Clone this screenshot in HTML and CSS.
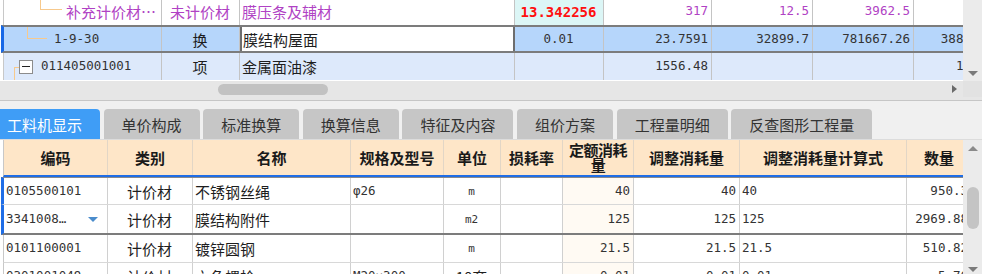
FILE: index.html
```html
<!DOCTYPE html>
<html lang="zh-CN">
<head>
    <meta charset="UTF-8">
    <title>工料机显示</title>
    <link rel="stylesheet" href="styles.css">
</head>
<body>
    <div class="top-pane">
        <div class="top-main">
            <div class="tree-grid">
                <div class="trow first">
                    <div class="cell code"><span class="branch b1"></span><span class="purple t1">补充计价材…</span></div>
                    <div class="cell center purple">未计价材</div>
                    <div class="cell purple">膜压条及辅材</div>
                    <div class="cell center num hi">13.342256</div>
                    <div class="cell right num purple">317</div>
                    <div class="cell right num purple">12.5</div>
                    <div class="cell right num purple">3962.5</div>
                    <div class="cell right num"></div>
                </div>
                <div class="trow sel">
                    <div class="cell code"><span class="branch b2"></span><span class="num t2">1-9-30</span></div>
                    <div class="cell center">换</div>
                    <div class="cell edit">膜结构屋面</div>
                    <div class="cell center num">0.01</div>
                    <div class="cell right num">23.7591</div>
                    <div class="cell right num">32899.7</div>
                    <div class="cell right num">781667.26</div>
                    <div class="cell right num">3888.9</div>
                </div>
                <div class="trow item">
                    <div class="cell code"><span class="branch b3"></span><span class="toggle"><span></span></span><span class="num t3">011405001001</span></div>
                    <div class="cell center">项</div>
                    <div class="cell">金属面油漆</div>
                    <div class="cell"></div>
                    <div class="cell right num">1556.48</div>
                    <div class="cell"></div>
                    <div class="cell"></div>
                    <div class="cell right num">1.00</div>
                </div>
            </div>
            <div class="vscroll top-vs"><span class="arrow down"></span></div>
        </div>
        <div class="hscroll-row">
            <div class="hscroll"><span class="thumb-h"></span><span class="arrow right"></span></div>
            <div class="corner"></div>
        </div>
    </div>

    <div class="tabs">
        <div class="tab active">工料机显示</div>
        <div class="tab">单价构成</div>
        <div class="tab">标准换算</div>
        <div class="tab">换算信息</div>
        <div class="tab">特征及内容</div>
        <div class="tab">组价方案</div>
        <div class="tab">工程量明细</div>
        <div class="tab">反查图形工程量</div>
    </div>

    <div class="bottom-pane">
        <div class="res-grid">
            <div class="grow head">
                <div class="hcell">编码</div>
                <div class="hcell">类别</div>
                <div class="hcell">名称</div>
                <div class="hcell">规格及型号</div>
                <div class="hcell">单位</div>
                <div class="hcell">损耗率</div>
                <div class="hcell tight">定额消耗<br>量</div>
                <div class="hcell">调整消耗量</div>
                <div class="hcell">调整消耗量计算式</div>
                <div class="hcell">数量</div>
            </div>
            <div class="grow sel sel-top">
                <div class="cell num">0105500101</div>
                <div class="cell center">计价材</div>
                <div class="cell">不锈钢丝绳</div>
                <div class="cell num spec">φ26</div>
                <div class="cell center unit">m</div>
                <div class="cell"></div>
                <div class="cell right num quota">40</div>
                <div class="cell right num">40</div>
                <div class="cell num">40</div>
                <div class="cell right num">950.3</div>
            </div>
            <div class="grow sel sel-bottom">
                <div class="cell num">3341008…<span class="drop"></span></div>
                <div class="cell center">计价材</div>
                <div class="cell">膜结构附件</div>
                <div class="cell"></div>
                <div class="cell center unit">m2</div>
                <div class="cell"></div>
                <div class="cell right num quota">125</div>
                <div class="cell right num">125</div>
                <div class="cell num">125</div>
                <div class="cell right num">2969.88</div>
            </div>
            <div class="grow">
                <div class="cell num">0101100001</div>
                <div class="cell center">计价材</div>
                <div class="cell">镀锌圆钢</div>
                <div class="cell"></div>
                <div class="cell center unit">m</div>
                <div class="cell"></div>
                <div class="cell right num quota">21.5</div>
                <div class="cell right num">21.5</div>
                <div class="cell num">21.5</div>
                <div class="cell right num">510.82</div>
            </div>
            <div class="grow">
                <div class="cell num">0301001049</div>
                <div class="cell center">计价材</div>
                <div class="cell">六角螺栓</div>
                <div class="cell num spec">M20×300</div>
                <div class="cell center">10套</div>
                <div class="cell"></div>
                <div class="cell right num quota">0.01</div>
                <div class="cell right num">0.01</div>
                <div class="cell num">0.01</div>
                <div class="cell right num">5.76</div>
            </div>
        </div>
        <div class="vscroll bottom-vs">
            <span class="arrow up"></span>
            <span class="thumb-v"></span>
            <span class="arrow down"></span>
        </div>
    </div>
</body>
</html>
```

FILE: styles.css
```css
* {
    box-sizing: border-box;
}
body {
    margin: 0;
    width: 982px;
    height: 274px;
    overflow: hidden;
    background-color: #f0f0f0;
    font-family: 'Noto Sans CJK SC', 'Noto Sans', sans-serif;
    font-size: 15px;
    color: #1e1e1e;
}

/* top tree grid */
.top-pane {
    height: 101px;
    background: #e6e6e6;
    border-bottom: 1px solid #c6c6c6;
}
.top-main {
    display: flex;
    height: 81px;
    background: #ffffff;
}
.tree-grid {
    flex: 1;
    overflow: hidden;
    padding-left: 2px;
}
.trow {
    display: grid;
    grid-template-columns: 158px 78px 275px 89px 108px 101px 101px 76px;
    height: 27px;
    margin-left: 1px;
    border-left: 1px solid #c8c8c8;
}
.trow.first {
    margin-top: -2px;
}
.trow.sel {
    height: 28px;
    margin-left: -1px;
    border-left: 3px solid #1768e6;
    border-top: 2px solid #7c7c7c;
    border-bottom: 2px solid #7c7c7c;
    background: #b6d6fb;
}
.trow.item {
    background: #dde9fb;
}
.cell {
    display: flex;
    align-items: center;
    padding: 0 3px 0 2px;
    border-right: 1px solid #d0d0d0;
    white-space: nowrap;
    overflow: hidden;
    line-height: 1;
}
.trow .cell {
    border-right-color: #c4c4c4;
}
.center {
    justify-content: center;
}
.right {
    justify-content: flex-end;
}
.num {
    font-family: 'DejaVu Sans Mono', monospace;
    font-size: 12.5px;
    color: #333333;
}
.purple {
    color: #b042c4;
}
.hi {
    background: #dcf6f6;
    color: #ff1010;
    font-weight: bold;
    font-size: 14px;
}
.cell.edit {
    background: #ffffff;
    border-left: 2px solid #6e6e6e;
    border-right: 2px solid #6e6e6e;
    padding-left: 1px;
}

/* tree connectors */
.cell.code {
    padding: 0;
    align-items: stretch;
}
.branch {
    border-left: 1px solid #f7c98c;
    border-bottom: 1px solid #f7c98c;
}
.b1 {
    margin-left: 36px;
    width: 22px;
    height: 12px;
}
.b2 {
    margin-left: 23px;
    width: 20px;
    height: 12px;
}
.b3 {
    margin-left: 10px;
    width: 5px;
    height: 13px;
    align-self: flex-end;
    border-bottom: none;
    border-top: 1px solid #f7c98c;
}
.t1, .t2, .t3 {
    align-self: center;
}
.t1 {
    margin-left: 4px;
}
.t2 {
    margin-left: 7px;
}
.t3 {
    margin-left: 8px;
}
.toggle {
    align-self: center;
    display: flex;
    align-items: center;
    justify-content: center;
    width: 14px;
    height: 14px;
    border: 1px solid #8c8c8c;
    background: #ffffff;
}
.toggle span {
    width: 8px;
    height: 1px;
    background: #222222;
}

/* scrollbars */
.vscroll {
    width: 19px;
    background: #ebebeb;
    display: flex;
    flex-direction: column;
    align-items: center;
}
.top-vs {
    justify-content: flex-end;
    padding-bottom: 5px;
}
.hscroll-row {
    display: flex;
    height: 16px;
}
.hscroll {
    flex: 1;
    display: flex;
    align-items: center;
    background: #e6e6e6;
}
.corner {
    width: 19px;
    background: #e2e2e2;
}
.thumb-h {
    margin-left: 218px;
    width: 110px;
    height: 11px;
    border-radius: 6px;
    background: #c2c2c2;
}
.arrow {
    width: 0;
    height: 0;
    border-style: solid;
    border-color: transparent;
}
.arrow.down {
    border-width: 5px 5px 0 5px;
    border-top-color: #7a7a7a;
}
.arrow.up {
    border-width: 0 5px 5px 5px;
    border-bottom-color: #8a8a8a;
}
.arrow.right {
    margin-left: auto;
    margin-right: 6px;
    border-width: 4.5px 0 4.5px 5px;
    border-left-color: #6a6a6a;
}

/* tabs */
.tabs {
    display: flex;
    align-items: flex-end;
    gap: 3.6px;
    height: 39px;
    padding-top: 8px;
    border-bottom: 1px solid #dcdcdc;
    overflow: hidden;
}
.tab {
    height: 30px;
    padding: 0 18px;
    display: flex;
    align-items: center;
    border-radius: 4px 4px 0 0;
    background: #c6c6c6;
    color: #333333;
    white-space: nowrap;
    line-height: 1;
}
.tab.active {
    margin-left: -11px;
    background: #3f9df6;
    color: #ffffff;
}

/* bottom resource grid */
.bottom-pane {
    display: flex;
    height: 134px;
    overflow: hidden;
}
.res-grid {
    flex: 1;
    overflow: hidden;
    padding-left: 2px;
    background: #ffffff;
}
.grow {
    display: grid;
    grid-template-columns: 104px 85px 158px 93px 57px 62px 71px 106px 167px 65px;
    height: 28px;
    margin-left: 1px;
    border-left: 1px solid #c8c8c8;
    border-bottom: 1px solid #d8d8d8;
}
.grow.head {
    height: 37px;
    background: #fee6c8;
    border-bottom: 2px solid #1f6de6;
}
.hcell {
    display: flex;
    align-items: center;
    justify-content: center;
    text-align: center;
    font-weight: bold;
    line-height: 16px;
    border-right: 1px solid #e2d6c6;
    white-space: nowrap;
    color: #1a1a1a;
}
.hcell.tight {
    line-height: 15px;
    letter-spacing: -0.5px;
    padding-bottom: 1px;
}
.grow.sel {
    margin-left: -1px;
    border-left: 3px solid #1f6de6;
}
.grow.sel-top {
    border-top: 1px solid #8a8a8a;
}
.grow.sel-bottom {
    height: 30px;
    border-bottom: 2px solid #7c7c7c;
}
.grow .num {
    padding-left: 2px;
}
.grow .num.right, .grow .cell.right {
    padding-right: 3px;
}
.spec {
    padding-left: 4px;
}
.unit {
    font-family: 'DejaVu Sans Mono', monospace;
    font-size: 11px;
    color: #333333;
}
.quota {
    background: #fffaf3;
}
.drop {
    margin-left: auto;
    margin-right: 6px;
    width: 0;
    height: 0;
    border-style: solid;
    border-color: transparent;
    border-width: 5px 5px 0 5px;
    border-top-color: #4a8ccc;
}
.bottom-vs {
    padding: 6px 0 2px;
}
.thumb-v {
    margin-top: 36px;
    width: 12px;
    height: 42px;
    border-radius: 6px;
    background: #c4c4c4;
}
.bottom-vs .arrow.down {
    margin-top: auto;
}
```
